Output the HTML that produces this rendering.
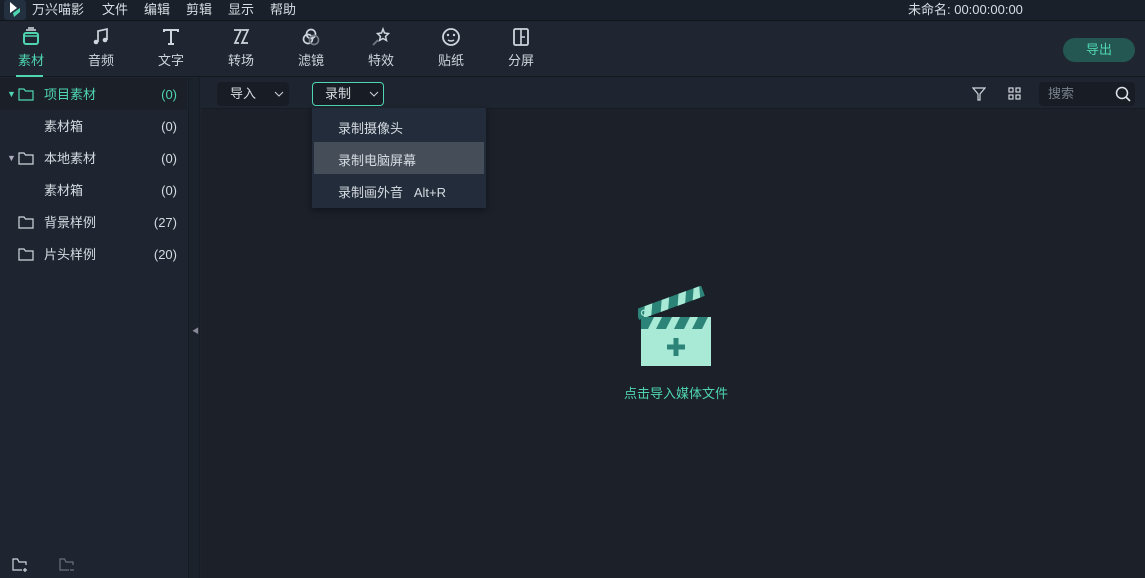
<!DOCTYPE html>
<html><head><meta charset="utf-8"><style>
*{margin:0;padding:0;box-sizing:border-box}
body{width:1145px;height:578px;background:#1e242e;font-family:"Liberation Sans","Noto Sans CJK SC",sans-serif;color:#d6dbe2;font-size:13px;position:relative;overflow:hidden}
.abs{position:absolute}
#top{left:0;top:0;width:1145px;height:21px;background:#1a2029;border-bottom:1px solid #12161c}
#tool{left:0;top:22px;width:1145px;height:55px;background:#1f2631;border-bottom:1px solid #14181e}
.menu{top:-1px;font-size:13px;color:#d8dde4}
.tb{top:27px;width:50px;text-align:center;font-size:13px;color:#cfd5dc}
.tb svg{display:block;margin:0 auto 3px}
#side{left:0;top:78px;width:188px;height:500px;background:#1f2530}
#gap{left:188px;top:78px;width:12px;height:500px;background:#1c222b;border-left:1px solid #171b22;border-right:1px solid #171b22}
#main{left:201px;top:78px;width:944px;height:500px;background:#1b2029}
#bar{left:201px;top:78px;width:944px;height:31px;background:#1f2530;border-bottom:1px solid #171b22}
.row{left:0;width:188px;height:32px;font-size:13px;line-height:32px}
.row .n{position:absolute;right:11px}
.row .t{position:absolute;left:44px}
</style></head><body>
<div id="top" class="abs">
 <div class="abs" style="left:4px;top:0;width:22px;height:20px;background:#233040;border-radius:3px"></div>
 <svg class="abs" style="left:8px;top:1px" width="14" height="17"><path d="M2 1 L9 7 L2 12 Z" fill="#fff"/><path d="M5 12 L12 7 L12 11 L6 16 Z" fill="#4fd6b0"/></svg>
 <div class="abs menu" style="left:32px">万兴喵影</div>
 <div class="abs menu" style="left:102px">文件</div>
 <div class="abs menu" style="left:144px">编辑</div>
 <div class="abs menu" style="left:186px">剪辑</div>
 <div class="abs menu" style="left:228px">显示</div>
 <div class="abs menu" style="left:270px">帮助</div>
 <div class="abs menu" style="left:908px">未命名: 00:00:00:00</div>
</div>
<div id="tool" class="abs"></div>
<div class="abs tb" style="left:6px;color:#4fd6b0"><svg width="20" height="20"><path d="M5 3h10M7 1h6" stroke="#d8dde4" stroke-width="1.5"/><rect x="3" y="6" width="14" height="11" rx="2" fill="none" stroke="#4fd6b0" stroke-width="2"/><path d="M4 9h12" stroke="#4fd6b0" stroke-width="1.5"/></svg>素材</div>
<div class="abs" style="left:16px;top:75px;width:27px;height:2px;background:#4fd6b0"></div>
<div class="abs tb" style="left:76px"><svg width="20" height="20"><path d="M7 15V4l9-2v11" stroke="#cfd5dc" stroke-width="1.7" fill="none"/><circle cx="5" cy="15" r="2.3" fill="#cfd5dc"/><circle cx="14" cy="13" r="2.3" fill="#cfd5dc"/></svg>音频</div>
<div class="abs tb" style="left:146px"><svg width="20" height="20"><path d="M3 5V3h14v2M10 3v14M7 17h6" stroke="#cfd5dc" stroke-width="2" fill="none"/></svg>文字</div>
<div class="abs tb" style="left:216px"><svg width="20" height="20"><path d="M3 3h7l-6 13h4M11 3h6l-6 13h6" stroke="#cfd5dc" stroke-width="1.7" fill="none"/></svg>转场</div>
<div class="abs tb" style="left:286px"><svg width="20" height="20"><circle cx="10" cy="7" r="4.5" fill="none" stroke="#cfd5dc" stroke-width="1.7"/><circle cx="7" cy="12" r="4.5" fill="none" stroke="#cfd5dc" stroke-width="1.7"/><circle cx="13" cy="13" r="4.5" fill="none" stroke="#767c85" stroke-width="1.7"/></svg>滤镜</div>
<div class="abs tb" style="left:356px"><svg width="20" height="20"><path d="M12 2l1.5 4 4 .5-3 3 1 4-3.5-2-3.5 2 1-4-3-3 4-.5z" fill="none" stroke="#cfd5dc" stroke-width="1.5"/><path d="M7 13l-5 5" stroke="#767c85" stroke-width="1.7"/></svg>特效</div>
<div class="abs tb" style="left:426px"><svg width="20" height="20"><circle cx="10" cy="10" r="8" fill="none" stroke="#cfd5dc" stroke-width="1.8"/><circle cx="7" cy="8" r="1.2" fill="#cfd5dc"/><circle cx="13" cy="8" r="1.2" fill="#cfd5dc"/><path d="M7 13q3 2 6 0" stroke="#cfd5dc" stroke-width="1.5" fill="none"/></svg>贴纸</div>
<div class="abs tb" style="left:496px"><svg width="20" height="20"><rect x="3" y="2" width="14" height="16" rx="1.5" fill="none" stroke="#cfd5dc" stroke-width="1.8"/><path d="M10 2v16M10 10h4" stroke="#cfd5dc" stroke-width="1.6"/></svg>分屏</div>
<div class="abs" style="left:1063px;top:38px;width:72px;height:24px;border-radius:12px;background:#245751;color:#4fd6b0;text-align:center;line-height:24px;font-size:13px">导出</div>

<div id="side" class="abs"></div>
<div class="abs" style="left:0;top:78px;width:187px;height:32px;background:#1a1f28"></div>
<div class="abs row" style="top:79px;color:#4fd6b0"><span class="abs" style="left:7px;top:-1px;font-size:9px">▼</span><svg class="abs" style="left:18px;top:9px" width="16" height="13"><path d="M1 1h5l1.5 2H15v9H1z" fill="none" stroke="#4fd6b0" stroke-width="1.2"/></svg><span class="t">项目素材</span><span class="n">(0)</span></div>
<div class="abs row" style="top:111px"><span class="t">素材箱</span><span class="n">(0)</span></div>
<div class="abs row" style="top:143px"><span class="abs" style="left:7px;top:-1px;font-size:9px;color:#aab">▼</span><svg class="abs" style="left:18px;top:9px" width="16" height="13"><path d="M1 1h5l1.5 2H15v9H1z" fill="none" stroke="#d0d5dc" stroke-width="1.2"/></svg><span class="t">本地素材</span><span class="n">(0)</span></div>
<div class="abs row" style="top:175px"><span class="t">素材箱</span><span class="n">(0)</span></div>
<div class="abs row" style="top:207px"><svg class="abs" style="left:18px;top:9px" width="16" height="13"><path d="M1 1h5l1.5 2H15v9H1z" fill="none" stroke="#d0d5dc" stroke-width="1.2"/></svg><span class="t">背景样例</span><span class="n">(27)</span></div>
<div class="abs row" style="top:239px"><svg class="abs" style="left:18px;top:9px" width="16" height="13"><path d="M1 1h5l1.5 2H15v9H1z" fill="none" stroke="#d0d5dc" stroke-width="1.2"/></svg><span class="t">片头样例</span><span class="n">(20)</span></div>
<svg class="abs" style="left:12px;top:558px" width="16" height="14"><path d="M14 7V4H7L5.5 1H1v11h9M11 12h4M13 10v4" fill="none" stroke="#d0d5dc" stroke-width="1.2"/></svg>
<svg class="abs" style="left:59px;top:558px" width="16" height="14"><path d="M14 7V4H7L5.5 1H1v11h9M11 12h4" fill="none" stroke="#6b717a" stroke-width="1.2"/></svg>

<div id="gap" class="abs"></div>
<div class="abs" style="left:192px;top:326px;font-size:7px;color:#889">◀</div>
<div id="main" class="abs"></div>
<div id="bar" class="abs"></div>
<div class="abs" style="left:217px;top:82px;width:72px;height:24px;background:#181d25;border-radius:4px;line-height:24px;padding-left:13px">导入<svg class="abs" style="left:57px;top:9px" width="10" height="6"><path d="M1 1l4 4 4-4" stroke="#cfd5dc" fill="none"/></svg></div>
<div class="abs" style="left:312px;top:82px;width:72px;height:24px;background:#181d25;border:1px solid #4fd6b0;border-radius:4px;line-height:22px;padding-left:12px">录制<svg class="abs" style="left:56px;top:8px" width="10" height="6"><path d="M1 1l4 4 4-4" stroke="#cfd5dc" fill="none"/></svg></div>
<svg class="abs" style="left:972px;top:87px" width="14" height="14"><path d="M1 1h12L8 7v6H6V7z" fill="none" stroke="#d0d5dc" stroke-width="1.2"/></svg>
<svg class="abs" style="left:1008px;top:87px" width="14" height="14"><g fill="none" stroke="#d0d5dc" stroke-width="1.2"><rect x="1" y="1" width="4" height="4"/><rect x="8" y="1" width="4" height="4"/><rect x="1" y="8" width="4" height="4"/><rect x="8" y="8" width="4" height="4"/></g></svg>
<div class="abs" style="left:1039px;top:82px;width:96px;height:24px;background:#181d25;border-radius:4px;padding-left:9px;line-height:24px;color:#7a808a">搜索</div>
<svg class="abs" style="left:1115px;top:86px" width="16" height="16"><circle cx="7" cy="7" r="5.5" fill="none" stroke="#e0e4ea" stroke-width="1.5"/><path d="M11 11l4 4" stroke="#e0e4ea" stroke-width="1.6"/></svg>

<div class="abs" style="left:312px;top:108px;width:174px;height:100px;background:#222c3a;box-shadow:0 2px 6px rgba(0,0,0,.4)"></div>
<div class="abs" style="left:314px;top:142px;width:170px;height:32px;background:#444d58"></div>
<div class="abs" style="left:338px;top:118px">录制摄像头</div>
<div class="abs" style="left:338px;top:150px">录制电脑屏幕</div>
<div class="abs" style="left:338px;top:182px">录制画外音&nbsp;&nbsp;&nbsp;Alt+R</div>

<svg class="abs" style="left:638px;top:286px" width="76" height="82">
 <g transform="rotate(-20 4 36)"><rect x="2" y="22" width="70" height="11" fill="#2c8478"/><path d="M12 22h8l-5 11h-8zM30 22h8l-5 11h-8zM48 22h8l-5 11h-8zM64 22h6l-3 11h-8z" fill="#a8ead6"/><circle cx="9" cy="28" r="2.5" fill="none" stroke="#a8ead6" stroke-width="1.2"/></g>
 <rect x="3" y="31" width="70" height="12" fill="#2c8478"/>
 <path d="M10 43l6-12h8l-6 12zM28 43l6-12h8l-6 12zM46 43l6-12h8l-6 12zM64 43l6-12h3v12z" fill="#a8ead6"/>
 <rect x="3" y="43" width="70" height="37" fill="#a8ead6"/>
 <path d="M38 52v18M29 61h18" stroke="#2c8478" stroke-width="5"/>
</svg>
<div class="abs" style="left:624px;top:383px;color:#4fd6b0;font-size:13px">点击导入媒体文件</div>
</body></html>
